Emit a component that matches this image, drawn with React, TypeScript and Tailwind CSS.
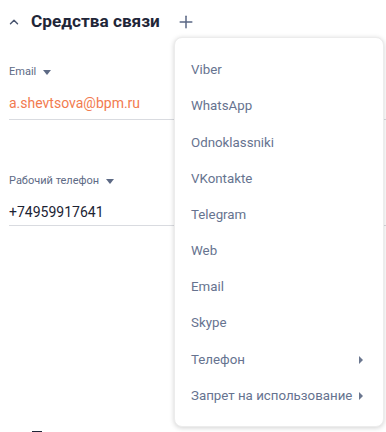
import { Plus, ChevronUp } from "lucide-react";

const channels = [
  "Viber",
  "WhatsApp",
  "Odnoklassniki",
  "VKontakte",
  "Telegram",
  "Web",
  "Email",
  "Skype",
];

function Caret() {
  return (
    <svg width="8" height="5" viewBox="0 0 8 5" className="ml-[7px]">
      <path d="M0 0h8L4 5z" fill="#5d6a85" />
    </svg>
  );
}

function SubArrow() {
  return (
    <svg width="4" height="8" viewBox="0 0 4 8" className="shrink-0">
      <path d="M0 0l4 4-4 4z" fill="#6b778f" />
    </svg>
  );
}

function Field({
  label,
  value,
  accent,
  lineGap,
}: {
  label: string;
  value: string;
  accent?: boolean;
  lineGap: string;
}) {
  return (
    <div className="pl-[9px]">
      <div className="flex items-center h-[16px] text-[11px] text-[#5d6a85]">
        {label}
        <Caret />
      </div>
      <div
        className={`mt-[13px] h-[20px] text-[14px] leading-[20px] ${
          accent ? "text-[#f27b4f]" : "text-[#1c2333]"
        }`}
      >
        {value}
      </div>
      <div className={`${lineGap} h-px bg-[#d9dbe0]`} />
    </div>
  );
}

export default function App() {
  return (
    <div
      className="relative w-[386px] h-[432px] overflow-hidden bg-white"
      style={{ fontFamily: "Roboto, 'Liberation Sans', sans-serif" }}
    >
      {/* Header */}
      <div className="flex items-center h-[24px] mt-[10px] pl-[7px]">
        <ChevronUp size={14} strokeWidth={2.5} className="text-[#4a5670]" />
        <span className="ml-[10px] text-[17.2px] font-bold text-[#1f2638]">Средства связи</span>
        <Plus size={20} strokeWidth={1.8} className="ml-[16px] text-[#5a6784]" />
      </div>

      <div className="mt-[30px]">
        <Field label="Email" value="a.shevtsova@bpm.ru" accent lineGap="mt-[6px]" />
      </div>
      <div className="mt-[53px]">
        <Field label="Рабочий телефон" value="+74959917641" lineGap="mt-[3px]" />
      </div>

      <div className="mt-[205px] pl-[32px]">
        <div className="w-[10px] h-[2px] bg-[#1f2638]" />
      </div>

      {/* Dropdown menu */}
      <div className="absolute left-[174px] top-[37px] w-[210px] h-[390px] rounded-[8px] bg-white shadow-[0_1px_5px_rgba(0,0,0,0.18)] border border-[#ececec] pt-[14px]">
        {channels.map((c) => (
          <div key={c} className="h-[36.2px] flex items-center pl-[16px] text-[13.3px] text-[#66738f]">
            {c}
          </div>
        ))}
        <div className="h-[36.2px] flex items-center justify-between gap-[4px] pl-[16px] pr-[20px] text-[13.3px] text-[#66738f]">
          Телефон
          <SubArrow />
        </div>
        <div className="h-[36.2px] flex items-center justify-between gap-[4px] pl-[16px] pr-[20px] text-[13.3px] text-[#66738f]">
          Запрет на использование
          <SubArrow />
        </div>
      </div>
    </div>
  );
}
